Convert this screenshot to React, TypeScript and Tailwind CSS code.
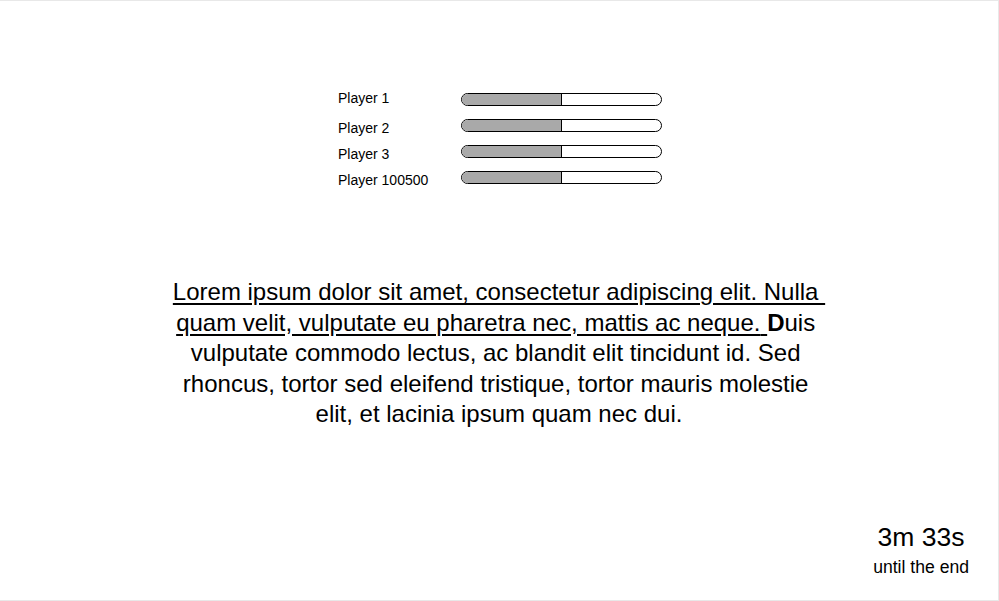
const players = [
  { name: "Player 1", progress: 50, first: true },
  { name: "Player 2", progress: 50 },
  { name: "Player 3", progress: 50 },
  { name: "Player 100500", progress: 50 },
];

function PlayerRow({ name, progress, first }: { name: string; progress: number; first?: boolean }) {
  return (
    <div className="flex items-start h-[26px]">
      <div className={`w-[123px] text-[14px] leading-[16px] ${first ? "-mt-[3px]" : "mt-[1px]"}`}>{name}</div>
      <div className="w-[201px] h-[13px] border border-black rounded-full overflow-hidden bg-white">
        <div className="h-full bg-[#a9a9a9] border-r border-black" style={{ width: `${progress}%` }} />
      </div>
    </div>
  );
}

export default function App() {
  return (
    <div
      className="h-[601px] w-[999px] bg-white text-black border-t border-r border-b border-[#e8e8e8] flex flex-col"
      style={{ fontFamily: '"Liberation Sans", Arial, sans-serif' }}
    >
      <div className="mt-[92px] ml-[338px] w-[324px]">
        {players.map((p) => (
          <PlayerRow key={p.name} {...p} />
        ))}
      </div>

      <p className="mt-[80px] mx-auto w-[664px] text-center text-[24px] leading-[30.5px] whitespace-break-spaces">
        <span className="underline underline-offset-[3px]">
          Lorem ipsum dolor sit amet, consectetur adipiscing elit. Nulla quam velit, vulputate eu pharetra nec, mattis ac neque.{" "}
        </span>
        <b>D</b>uis vulputate commodo lectus, ac blandit elit tincidunt id. Sed rhoncus, tortor sed eleifend tristique, tortor mauris molestie elit, et lacinia ipsum quam nec dui.
      </p>

      <div className="mt-auto mb-[18px] mr-[29px] self-end text-center">
        <div className="text-[26.5px] leading-[30px]">3m 33s</div>
        <div className="text-[17.6px] leading-[30px]">until the end</div>
      </div>
    </div>
  );
}
